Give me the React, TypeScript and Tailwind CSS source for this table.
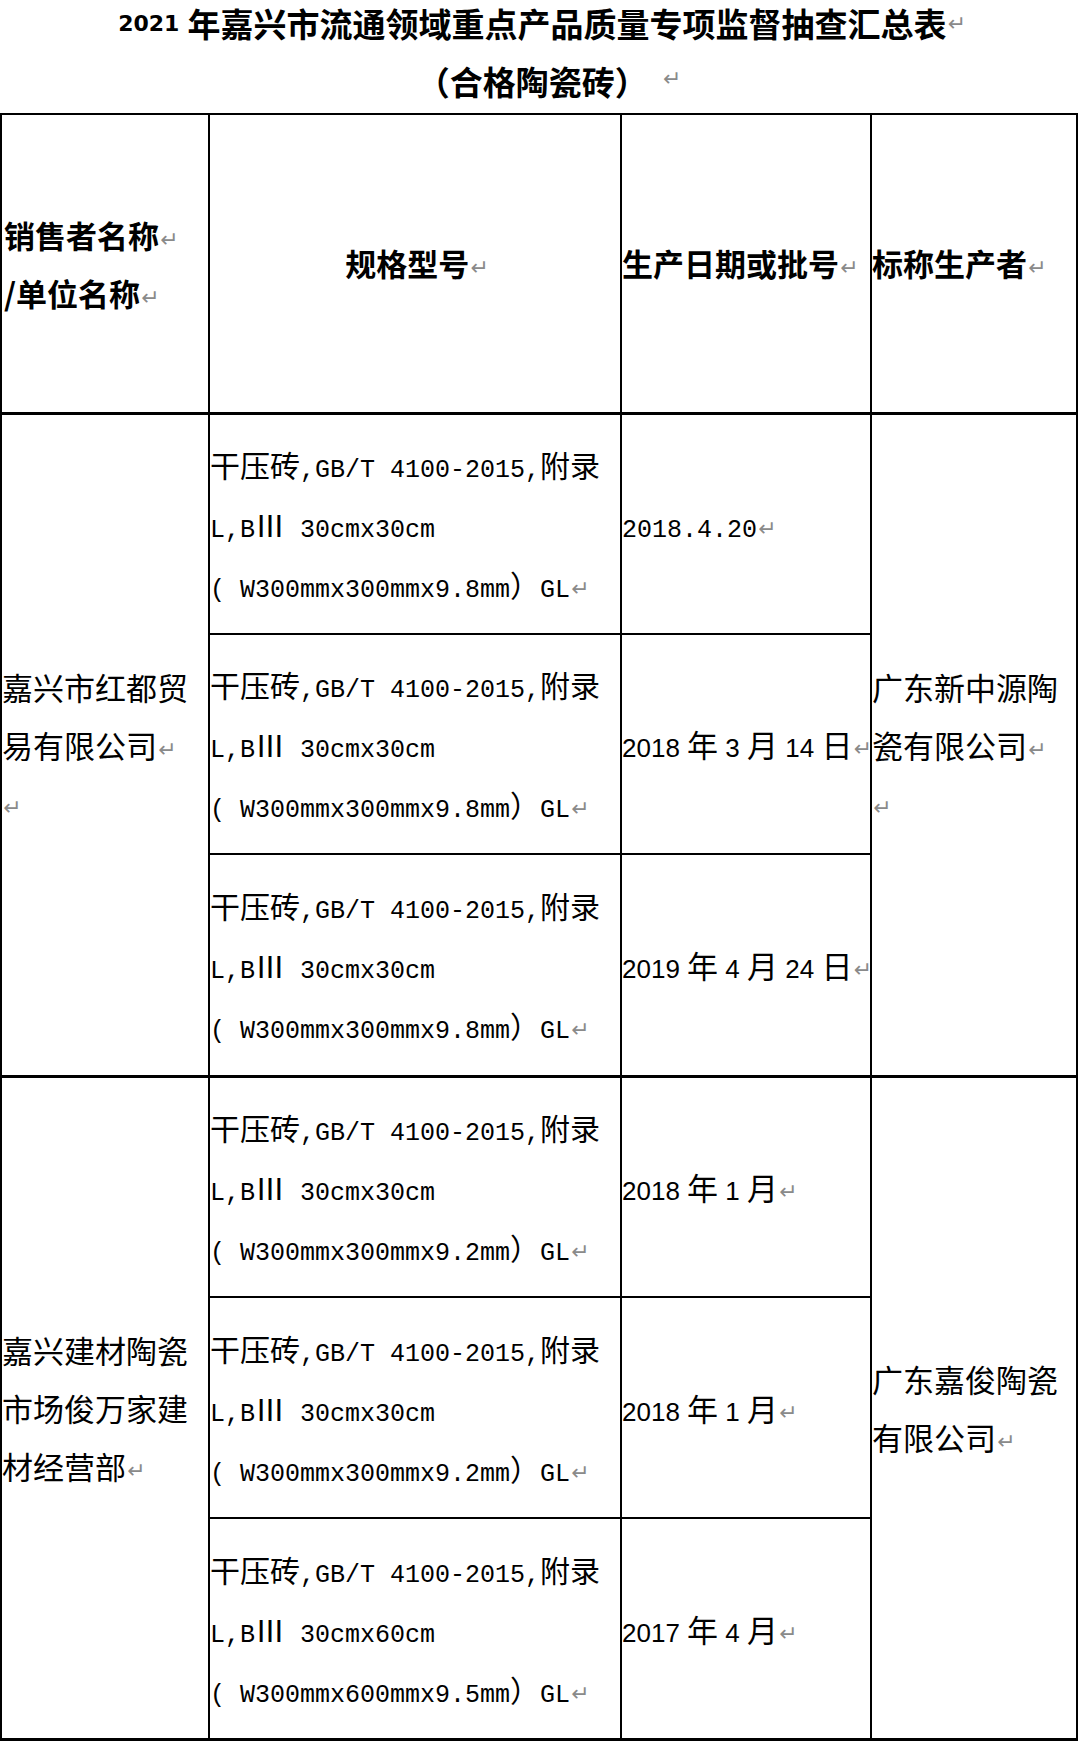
import React from "react";

const WIDE = /[\u2160-\u217f\u3000-\u30ff\u4e00-\u9fff\uff00-\uffef]/;

// split a string into runs of full-width (CJK) and half-width characters
function runs(text: string) {
  const out: { wide: boolean; s: string }[] = [];
  for (const ch of text) {
    const w = WIDE.test(ch);
    const last = out[out.length - 1];
    if (last && last.wide === w) last.s += ch;
    else out.push({ wide: w, s: ch });
  }
  return out;
}

function Mixed({
  text,
  wide,
  narrow,
}: {
  text: string;
  wide: string;
  narrow: string;
}) {
  return (
    <>
      {runs(text).map((r, i) => (
        <span key={i} className={r.wide ? wide : narrow}>
          {r.s}
        </span>
      ))}
    </>
  );
}

function Mark() {
  return (
    <span className="ml-[1px] font-['DejaVu_Sans',sans-serif] text-[22px] leading-none font-normal text-[#8a8a8a] align-[1px]">
      ↵
    </span>
  );
}

const cjk = "font-['Noto_Sans_CJK_SC',sans-serif] text-[30px]";
const mono = "font-['Liberation_Mono',monospace] text-[25px] leading-none";
const sansDigits = "font-['Liberation_Sans',sans-serif] text-[26px] leading-none";
const cjkDate = "font-['Noto_Sans_CJK_SC',sans-serif] text-[31px]";

function Spec({ size, thick }: { size: string; thick: string }) {
  return (
    <div className="flex flex-col font-['Noto_Sans_CJK_SC',sans-serif] text-[30px] leading-[60px] whitespace-nowrap">
      <div className="h-[60px]">
        <Mixed text="干压砖,GB/T 4100-2015,附录" wide={cjk} narrow={mono} />
      </div>
      <div className="h-[60px]">
        <Mixed text={`L,BⅢ ${size}`} wide={cjk} narrow={mono} />
      </div>
      <div className="h-[60px]">
        <Mixed text={`( ${thick}）GL`} wide={cjk} narrow={mono} />
        <Mark />
      </div>
    </div>
  );
}

function DateText({ text, digitsMono }: { text: string; digitsMono?: boolean }) {
  return (
    <div className="h-[60px] font-['Noto_Sans_CJK_SC',sans-serif] text-[31px] leading-[60px] whitespace-nowrap">
      <Mixed text={text} wide={cjkDate} narrow={digitsMono ? mono : sansDigits} />
      <Mark />
    </div>
  );
}

function Lines({ lines, trailing }: { lines: string[]; trailing?: boolean }) {
  return (
    <div className="flex flex-col leading-[58px] whitespace-nowrap font-['Noto_Sans_CJK_SC',sans-serif] text-[31px] text-black">
      {lines.map((l, i) => (
        <div key={i} className="h-[58px]">
          {l}
          {i === lines.length - 1 && <Mark />}
        </div>
      ))}
      {trailing && (
        <div className="h-[58px]">
          <Mark />
        </div>
      )}
    </div>
  );
}

const cell = "flex items-center border-r-2 border-black";
const head = "font-['Noto_Sans_CJK_SC',sans-serif] text-[31px] font-bold whitespace-nowrap";

export default function App() {
  return (
    <div className="w-[1080px] min-h-[1743px] bg-white text-black">
      <div className="flex h-[47px] items-center justify-center pl-[4px] font-bold leading-[47px]">
        <span className="font-['DejaVu_Sans',sans-serif] text-[22px] mr-[8px]">2021</span>
        <span className="font-['Noto_Sans_CJK_SC',sans-serif] text-[33px]">
          年嘉兴市流通领域重点产品质量专项监督抽查汇总表
        </span>
        <Mark />
      </div>
      <div className="flex h-[66px] items-center justify-center pt-[2px] pl-[18px] font-bold leading-[60px]">
        <span className="font-['Noto_Sans_CJK_SC',sans-serif] text-[33px]">
          （合格陶瓷砖）
        </span>
        <span className="ml-[14px]">
          <Mark />
        </span>
      </div>

      <div className="grid w-fit grid-cols-[208px_412px_250px_206px] grid-rows-[300px_220px_220px_223px_220px_221px_222px] border-l-2 border-t-2 border-black">
        {/* header */}
        <div className={`${cell} border-b-[3px] pl-[2px]`}>
          <div className={`flex flex-col leading-[58px] ${head}`}>
            <div className="h-[58px]">
              销售者名称
              <Mark />
            </div>
            <div className="h-[58px]">
              /单位名称
              <Mark />
            </div>
          </div>
        </div>
        <div className={`${cell} border-b-[3px] justify-center pl-[4px]`}>
          <div className={head}>
            规格型号
            <Mark />
          </div>
        </div>
        <div className={`${cell} border-b-[3px]`}>
          <div className={head}>
            生产日期或批号
            <Mark />
          </div>
        </div>
        <div className={`${cell} border-b-[3px]`}>
          <div className={head}>
            标称生产者
            <Mark />
          </div>
        </div>

        {/* group 1 */}
        <div className={`${cell} col-start-1 row-start-2 row-span-3 border-b-[3px]`}>
          <Lines lines={["嘉兴市红都贸", "易有限公司"]} trailing />
        </div>
        <div className={`${cell} col-start-2 row-start-2 border-b-2`}>
          <Spec size="30cmx30cm" thick="W300mmx300mmx9.8mm" />
        </div>
        <div className={`${cell} col-start-3 row-start-2 border-b-2`}>
          <DateText text="2018.4.20" digitsMono />
        </div>
        <div className={`${cell} col-start-2 row-start-3 border-b-2`}>
          <Spec size="30cmx30cm" thick="W300mmx300mmx9.8mm" />
        </div>
        <div className={`${cell} col-start-3 row-start-3 border-b-2`}>
          <DateText text="2018 年 3 月 14 日" />
        </div>
        <div className={`${cell} col-start-2 row-start-4 border-b-[3px]`}>
          <Spec size="30cmx30cm" thick="W300mmx300mmx9.8mm" />
        </div>
        <div className={`${cell} col-start-3 row-start-4 border-b-[3px]`}>
          <DateText text="2019 年 4 月 24 日" />
        </div>
        <div className={`${cell} col-start-4 row-start-2 row-span-3 border-b-[3px]`}>
          <Lines lines={["广东新中源陶", "瓷有限公司"]} trailing />
        </div>

        {/* group 2 */}
        <div className={`${cell} col-start-1 row-start-5 row-span-3 border-b-[3px]`}>
          <Lines lines={["嘉兴建材陶瓷", "市场俊万家建", "材经营部"]} />
        </div>
        <div className={`${cell} col-start-2 row-start-5 border-b-2`}>
          <Spec size="30cmx30cm" thick="W300mmx300mmx9.2mm" />
        </div>
        <div className={`${cell} col-start-3 row-start-5 border-b-2`}>
          <DateText text="2018 年 1 月" />
        </div>
        <div className={`${cell} col-start-2 row-start-6 border-b-2`}>
          <Spec size="30cmx30cm" thick="W300mmx300mmx9.2mm" />
        </div>
        <div className={`${cell} col-start-3 row-start-6 border-b-2`}>
          <DateText text="2018 年 1 月" />
        </div>
        <div className={`${cell} col-start-2 row-start-7 border-b-[3px]`}>
          <Spec size="30cmx60cm" thick="W300mmx600mmx9.5mm" />
        </div>
        <div className={`${cell} col-start-3 row-start-7 border-b-[3px]`}>
          <DateText text="2017 年 4 月" />
        </div>
        <div className={`${cell} col-start-4 row-start-5 row-span-3 border-b-[3px]`}>
          <Lines lines={["广东嘉俊陶瓷", "有限公司"]} />
        </div>
      </div>
    </div>
  );
}
